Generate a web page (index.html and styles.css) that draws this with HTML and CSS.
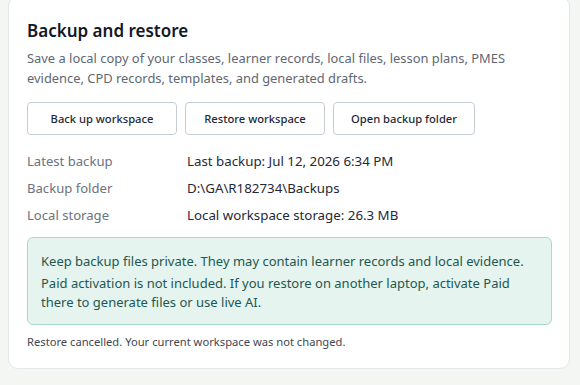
FILE: index.html
```html
<!DOCTYPE html>
<html lang="en">
<head>
<meta charset="utf-8">
<title>Backup and restore</title>
<link rel="stylesheet" href="styles.css">
</head>
<body>
<section class="card">
  <h2 class="title">Backup and restore</h2>
  <p class="desc">Save a local copy of your classes, learner records, local files, lesson plans, PMES evidence, CPD records, templates, and generated drafts.</p>
  <div class="actions">
    <button class="btn b1" type="button">Back up workspace</button>
    <button class="btn b2" type="button">Restore workspace</button>
    <button class="btn b3" type="button">Open backup folder</button>
  </div>
  <dl class="info">
    <dt>Latest backup</dt><dd>Last backup: Jul 12, 2026 6:34 PM</dd>
    <dt>Backup folder</dt><dd>D:\GA\R182734\Backups</dd>
    <dt>Local storage</dt><dd>Local workspace storage: 26.3 MB</dd>
  </dl>
  <div class="note">
    <p>Keep backup files private. They may contain learner records and local evidence.</p>
    <p>Paid activation is not included. If you restore on another laptop, activate Paid there to generate files or use live AI.</p>
  </div>
  <p class="status">Restore cancelled. Your current workspace was not changed.</p>
</section>
</body>
</html>
```
FILE: styles.css
```css
html, body {
  margin: 0;
  padding: 0;
}
body {
  background: #f4f6f3;
  font-family: "Noto Sans", "Open Sans", sans-serif;
  width: 580px;
  height: 385px;
  overflow: hidden;
}
.card {
  box-sizing: border-box;
  margin: -4px 0 0 8px;
  width: 562px;
  height: 373px;
  background: #ffffff;
  border: 1px solid #e3e7ea;
  border-radius: 10px;
  padding: 22px 18px 0 18px;
}
.title {
  margin: 0;
  font-size: 17px;
  font-weight: 600;
  line-height: 24px;
  color: #111827;
}
.desc {
  margin: 5px 0 0 0;
  font-size: 12.9px;
  line-height: 20px;
  color: #5f6774;
}
.actions {
  display: flex;
  gap: 8px;
  margin-top: 14px;
}
.btn {
  box-sizing: border-box;
  height: 33px;
  padding: 0;
  background: #ffffff;
  border: 1px solid #c6cdd6;
  border-radius: 4px;
  font-family: inherit;
  font-size: 11.2px;
  font-weight: 500;
  color: #1f2937;
}
.b1 { width: 150px; }
.b2 { width: 140px; }
.b3 { width: 142px; }
.info {
  display: grid;
  grid-template-columns: 160px 1fr;
  row-gap: 7px;
  margin: 16px 0 0 0;
  font-size: 13.1px;
  line-height: 20px;
}
.info dt {
  color: #6b7280;
}
.info dd {
  margin: 0;
  color: #1f2937;
  font-size: 13.3px;
}
.note {
  box-sizing: border-box;
  margin-top: 12px;
  width: 525px;
  background: #e5f4ef;
  border: 1px solid #a7d9cd;
  border-radius: 6px;
  padding: 14px 12px 12px 13px;
  color: #1d5850;
  font-size: 13px;
  line-height: 19px;
}
.note p {
  margin: 0;
}
.note p + p {
  margin-top: 3px;
}
.status {
  margin: 9px 0 0 0;
  font-size: 11.2px;
  line-height: 16px;
  color: #3f4650;
}
```
